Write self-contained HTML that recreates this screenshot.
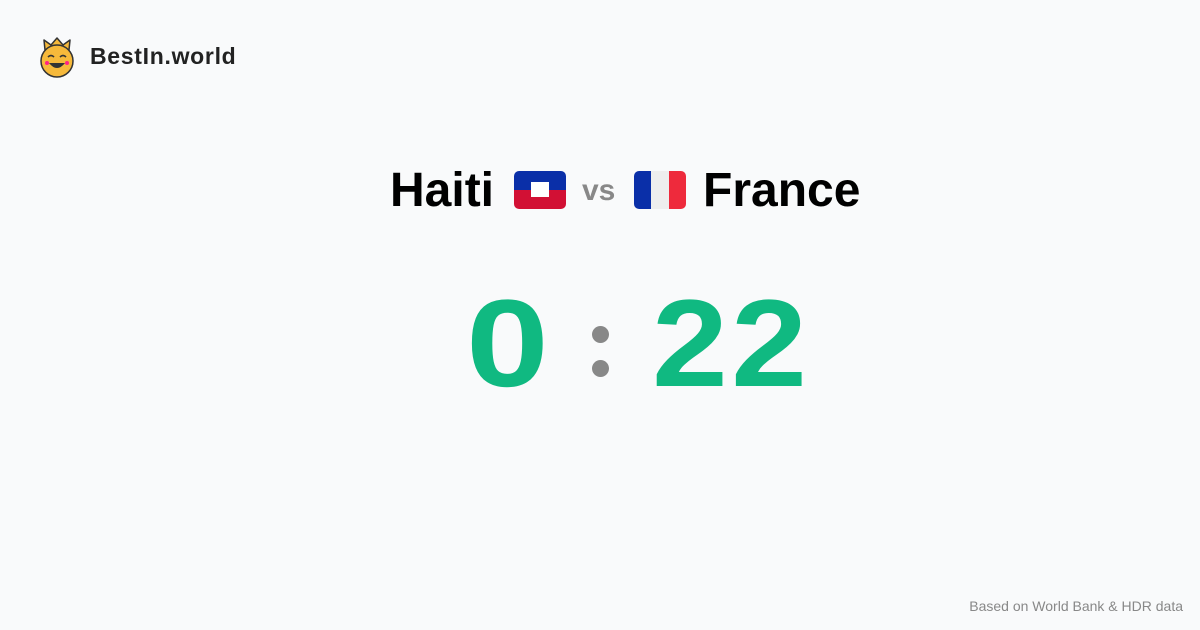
<!DOCTYPE html>
<html><head><meta charset="utf-8"><style>
body{margin:0;width:1200px;height:630px;background:#f9fafb;font-family:"Liberation Sans",sans-serif;position:relative;overflow:hidden}
.logo{position:absolute;left:38px;top:36px}
.brand{position:absolute;left:90px;top:43px;font-size:23px;font-weight:bold;color:#222;letter-spacing:0.7px}
.t{position:absolute;top:163px;font-size:48px;font-weight:bold;color:#000;line-height:56px}
.flag{position:absolute;top:171px;width:52px;height:38px;border-radius:5px;overflow:hidden}
.vs{position:absolute;left:582px;top:174px;font-size:30px;color:#888;font-weight:bold}
.n{position:absolute;top:282px;font-size:124px;font-weight:bold;color:#10b981;line-height:124px;transform-origin:left top}
.dot{position:absolute;left:592px;width:17px;height:17px;border-radius:50%;background:#888}
.foot{position:absolute;right:17px;top:598px;font-size:14px;color:#888}
</style></head><body>
<svg class="logo" width="38" height="42" viewBox="0 0 38 42">
<path d="M7 14 L6 4 L13 9 L19 2 L25 9 L32 4 L31 14 Z" fill="#f6b93b" stroke="#333" stroke-width="1.5" stroke-linejoin="round"/>
<circle cx="19" cy="25" r="16" fill="#f6b93b" stroke="#333" stroke-width="1.5"/>
<path d="M10 21 q3 -3 6 0 M22 21 q3 -3 6 0" stroke="#333" stroke-width="1.6" fill="none"/>
<path d="M11 27 q8 10 16 0 Z" fill="#333"/>
<circle cx="9" cy="27" r="2" fill="#f28"/><circle cx="29" cy="27" r="2" fill="#f28"/>
</svg>
<div class="brand">BestIn.world</div>
<div class="t" style="left:390px">Haiti</div>
<div class="flag" style="left:514px"><div style="height:50%;background:#0a2fa8"></div><div style="height:50%;background:#d21034"></div><div style="position:absolute;left:17px;top:11px;width:18px;height:15px;background:#fff"></div></div>
<div class="vs">vs</div>
<div class="flag" style="left:634px;display:flex"><div style="flex:1;background:#0a2fa8"></div><div style="flex:1;background:#eee"></div><div style="flex:1;background:#ee2a3c"></div></div>
<div class="t" style="left:703px">France</div>
<div class="n" style="left:466px;transform:scaleX(1.2)">0</div>
<div class="dot" style="top:326px"></div><div class="dot" style="top:360px"></div>
<div class="n" style="left:652px;transform:scaleX(1.1);letter-spacing:3px">22</div>
<div class="foot">Based on World Bank &amp; HDR data</div>
</body></html>
